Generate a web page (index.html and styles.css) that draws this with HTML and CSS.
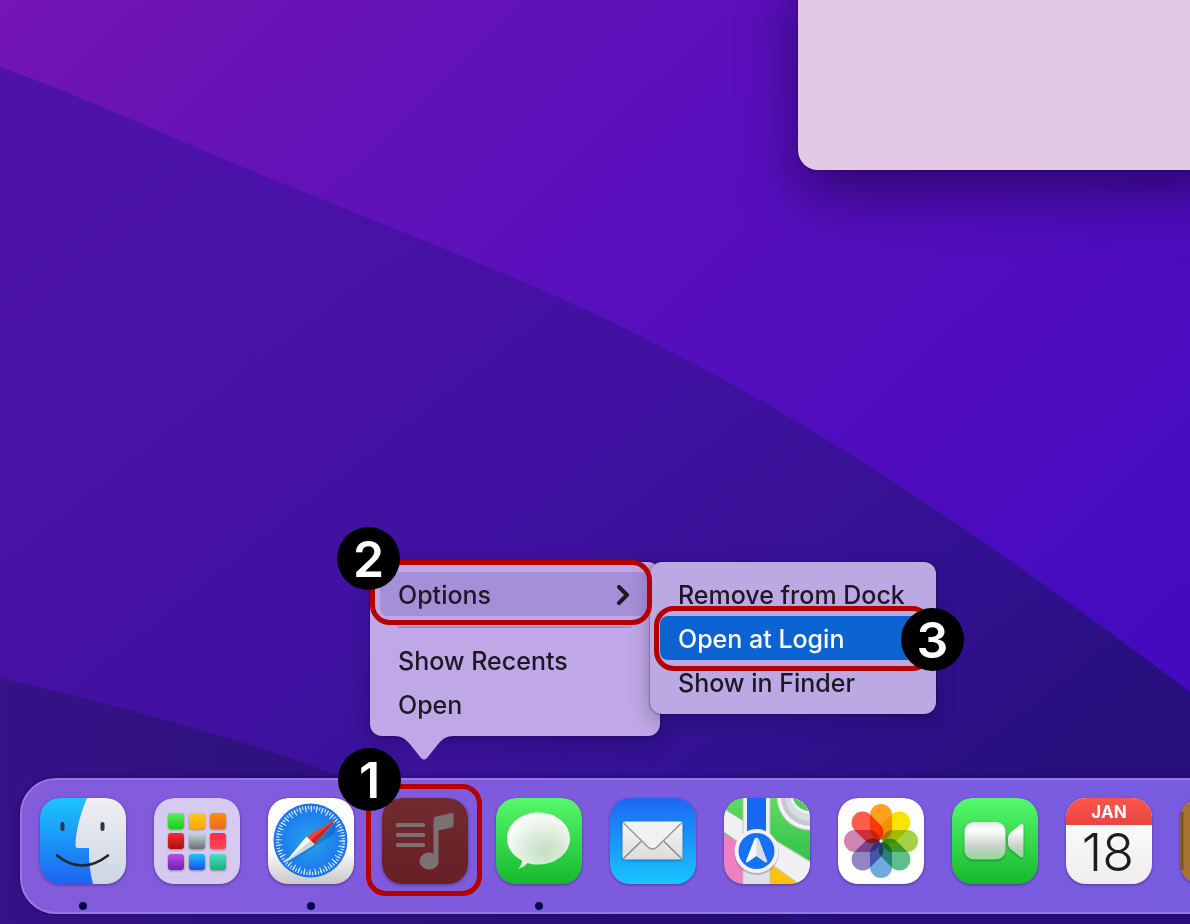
FILE: index.html
```
<!DOCTYPE html>
<html lang="en">
  <head>
    <meta charset="UTF-8" />
    <meta name="viewport" content="width=device-width, initial-scale=1.0" />
    <title>Desktop</title>
    <link rel="stylesheet" href="styles.css">
  </head>
  <body>
    <main class="desktop">
      <svg class="wallpaper" viewBox="0 0 1190 924" preserveAspectRatio="none" aria-hidden="true">
        <defs>
          <linearGradient id="sky" x1="0" y1="0" x2="1" y2="0.8">
            <stop offset="0" stop-color="#7415b4" />
            <stop offset="0.2" stop-color="#6512b6" />
            <stop offset="0.45" stop-color="#590fbd" />
            <stop offset="1" stop-color="#420abf" />
          </linearGradient>
          <linearGradient id="hill" gradientUnits="userSpaceOnUse" x1="200" y1="120" x2="830" y2="924">
            <stop offset="0" stop-color="#4c12aa" />
            <stop offset="0.5" stop-color="#4011a0" />
            <stop offset="0.8" stop-color="#321191" />
            <stop offset="1" stop-color="#27107e" />
          </linearGradient>
          <linearGradient id="valley" x1="0" y1="0" x2="1" y2="0">
            <stop offset="0" stop-color="#351286" />
            <stop offset="1" stop-color="#230f74" />
          </linearGradient>
        </defs>
        <rect width="1190" height="924" fill="url(#sky)" />
        <path d="M0 67C60 88 110 110 170 136C300 193 430 240 560 298C800 405 1000 550 1190 692V924H0Z" fill="url(#hill)" />
        <path d="M0 678C120 706 240 738 340 776C500 835 660 870 800 924H0Z" fill="url(#valley)" />
      </svg>

      <section class="window"></section>

      <nav class="dock">
        <button class="dock-item" aria-label="Finder">
          <svg class="icon" viewBox="0 0 86 86">
            <defs>
              <linearGradient id="finder" x2="0" y2="1"><stop stop-color="#1cc4fe" /><stop offset="1" stop-color="#1b64f2" /></linearGradient>
              <linearGradient id="face" x2="0" y2="1"><stop stop-color="#f0eff2" /><stop offset="1" stop-color="#cbd5e1" /></linearGradient>
              <clipPath id="tile"><rect width="86" height="86" rx="20" /></clipPath>
            </defs>
            <g clip-path="url(#tile)">
              <rect width="86" height="86" fill="url(#finder)" />
              <path d="M47 0C40 17 36 32 35.500 47Q35.500 50 38 50H49C48.500 62 50 75 53 86H86V0Z" fill="url(#face)" />
              <path d="M22.500 26V31M62.500 26V31" stroke="#32373f" stroke-width="4" stroke-linecap="round" />
              <path d="M17 57.500Q42 77.500 68 57.500" fill="none" stroke="#202630" stroke-width="2.600" stroke-linecap="round" />
            </g>
          </svg>
          <span class="running"></span>
        </button>

        <button class="dock-item" aria-label="Launchpad">
          <svg class="icon" viewBox="0 0 86 86">
            <defs>
              <linearGradient id="l1" x2="0" y2="1"><stop stop-color="#5bf05a" /><stop offset="1" stop-color="#14cf1b" /></linearGradient>
              <linearGradient id="l2" x2="0" y2="1"><stop stop-color="#ffc61c" /><stop offset="1" stop-color="#fda509" /></linearGradient>
              <linearGradient id="l3" x2="0" y2="1"><stop stop-color="#fa9108" /><stop offset="1" stop-color="#ee6a20" /></linearGradient>
              <linearGradient id="l4" x2="0" y2="1"><stop stop-color="#f52f2c" /><stop offset="1" stop-color="#b20d0d" /></linearGradient>
              <linearGradient id="l5" x2="0" y2="1"><stop stop-color="#c3dbe0" /><stop offset="1" stop-color="#6f6d72" /></linearGradient>
              <linearGradient id="l6" x2="0" y2="1"><stop stop-color="#fb2b48" /><stop offset="1" stop-color="#fe4659" /></linearGradient>
              <linearGradient id="l7" x2="0" y2="1"><stop stop-color="#bb50e8" /><stop offset="1" stop-color="#6f1fb0" /></linearGradient>
              <linearGradient id="l8" x2="0" y2="1"><stop stop-color="#1bc4fb" /><stop offset="1" stop-color="#1b50ee" /></linearGradient>
              <linearGradient id="l9" x2="0" y2="1"><stop stop-color="#50dcc8" /><stop offset="1" stop-color="#12b574" /></linearGradient>
            </defs>
            <rect width="86" height="86" rx="20" fill="#d6caf1" />
            <g class="pads">
              <rect x="14" y="15" width="16" height="16" rx="3" fill="url(#l1)" />
              <rect x="35" y="15" width="16" height="16" rx="3" fill="url(#l2)" />
              <rect x="56" y="15" width="16" height="16" rx="3" fill="url(#l3)" />
              <rect x="14" y="35" width="16" height="16" rx="3" fill="url(#l4)" />
              <rect x="35" y="35" width="16" height="16" rx="3" fill="url(#l5)" />
              <rect x="56" y="35" width="16" height="16" rx="3" fill="url(#l6)" />
              <rect x="14" y="56" width="16" height="16" rx="3" fill="url(#l7)" />
              <rect x="35" y="56" width="16" height="16" rx="3" fill="url(#l8)" />
              <rect x="56" y="56" width="16" height="16" rx="3" fill="url(#l9)" />
            </g>
          </svg>
        </button>

        <button class="dock-item" aria-label="Safari">
          <svg class="icon" viewBox="0 0 86 86">
            <defs>
              <linearGradient id="safari" x2="0" y2="1"><stop offset="0.6" stop-color="#fff" /><stop offset="1" stop-color="#c9c9cb" /></linearGradient>
              <radialGradient id="dial"><stop stop-color="#25a4ef" /><stop offset="1" stop-color="#1c72ea" /></radialGradient>
            </defs>
            <rect width="86" height="86" rx="20" fill="url(#safari)" />
            <circle cx="42.500" cy="42.500" r="37" fill="url(#dial)" />
            <circle cx="42.500" cy="42.500" r="33" fill="none" stroke="#d8edfd" stroke-width="3.500" stroke-dasharray="1.100 1.780" />
            <circle cx="42.500" cy="42.500" r="31.500" fill="none" stroke="#d8edfd" stroke-width="6" stroke-dasharray="1.100 4.398" />
            <path d="M20 66L47 46L70 22L66 36Z" fill="#0b3a8c" opacity="0.3" />
            <path d="M68 21L38.500 38.500L46.500 46.500Z" fill="#f0403c" />
            <path d="M68 21L42.500 42.500L46.500 46.500Z" fill="#c92424" />
            <path d="M17 64.500L38.500 38.500L46.500 46.500Z" fill="#fff" />
            <path d="M17 64.500L42.500 42.500L46.500 46.500Z" fill="#cfd3da" />
          </svg>
          <span class="running"></span>
        </button>

        <div class="dock-item">
          <button class="launcher" aria-label="Playlists">
            <svg class="icon" viewBox="0 0 86 86">
              <defs>
                <linearGradient id="music" x2="0" y2="1"><stop stop-color="#702a31" /><stop offset="1" stop-color="#672124" /></linearGradient>
              </defs>
              <rect width="86" height="86" rx="20" fill="url(#music)" />
              <g fill="#7c7072">
                <rect x="14" y="25" width="29" height="4" rx="1.500" />
                <rect x="14" y="35" width="29" height="4" rx="1.500" />
                <rect x="14" y="45" width="29" height="4" rx="1.500" />
                <path d="M51.500 21.500Q51.500 19 54 18.500L69.500 15Q71.500 15 71.500 17V27Q71.500 29 69.500 29.500L56.500 32.500V62A9.500 8.500 0 1 1 51.500 55.500Z" />
              </g>
            </svg>
          </button>
          <span class="ring ring-icon"></span>
          <span class="badge badge-icon">1</span>

          <div class="menu dock-menu">
            <div class="entry">
              <button class="menu-item open">
                Options
                <svg class="chevron" viewBox="0 0 12 20"><path d="M2 2L10 10L2 18" /></svg>
              </button>
              <div class="menu submenu">
                <button class="menu-item">Remove from Dock</button>
                <div class="entry">
                  <button class="menu-item selected">Open at Login</button>
                  <span class="ring ring-login"></span>
                  <span class="badge badge-login">3</span>
                </div>
                <button class="menu-item">Show in Finder</button>
              </div>
              <span class="ring ring-options"></span>
              <span class="badge badge-options">2</span>
            </div>
            <hr class="separator" />
            <button class="menu-item">Show Recents</button>
            <button class="menu-item">Open</button>
            <svg class="tail" viewBox="0 0 60 24"><path d="M0 0C8 0 11 3 15 7L27 22Q30 25 33 22L45 7C49 3 52 0 60 0Z" /></svg>
          </div>
        </div>

        <button class="dock-item" aria-label="Messages">
          <svg class="icon" viewBox="0 0 86 86">
            <defs>
              <linearGradient id="green" x2="0" y2="1"><stop stop-color="#55f76c" /><stop offset="1" stop-color="#17b92c" /></linearGradient>
              <radialGradient id="bubble" cx="0.6" cy="0.68" r="0.75"><stop stop-color="#c3dfc1" /><stop offset="0.4" stop-color="#dbebda" /><stop offset="0.8" stop-color="#f6faf6" /><stop offset="1" stop-color="#fff" /></radialGradient>
            </defs>
            <rect width="86" height="86" rx="20" fill="url(#green)" />
            <path d="M42.500 14.500C60 14.500 74 26 74 40.500S60 66.500 42.500 66.500C38.500 66.500 35 66 31.500 65C29 68 26 70 22.500 70.500C25 68 26 65 26 62.500C17 58 11 50 11 40.500C11 26 25 14.500 42.500 14.500Z" fill="url(#bubble)" />
          </svg>
          <span class="running"></span>
        </button>

        <button class="dock-item" aria-label="Mail">
          <svg class="icon" viewBox="0 0 86 86">
            <defs>
              <linearGradient id="mail" x2="0" y2="1"><stop stop-color="#1b67f2" /><stop offset="1" stop-color="#1ac5fe" /></linearGradient>
              <linearGradient id="paper" x2="0" y2="1"><stop stop-color="#f6f6f6" /><stop offset="1" stop-color="#dcdcdc" /></linearGradient>
            </defs>
            <rect width="86" height="86" rx="20" fill="url(#mail)" />
            <g class="raised">
              <rect x="12.500" y="23.500" width="60" height="38" rx="2.500" fill="url(#paper)" />
              <path d="M13.500 60.500L31 43.500M71.500 60.500L54 43.500" stroke="#808080" stroke-width="1.200" />
              <path d="M13.500 25L36 47Q42.500 55 49 47L71.500 25" fill="#f1f1f1" stroke="#989898" stroke-width="1.500" />
            </g>
          </svg>
        </button>

        <button class="dock-item" aria-label="Maps">
          <svg class="icon" viewBox="0 0 86 86">
            <defs>
              <linearGradient id="land" x2="0" y2="1"><stop stop-color="#5edb5b" /><stop offset="1" stop-color="#24b947" /></linearGradient>
            </defs>
            <g clip-path="url(#tile)">
              <rect width="86" height="86" fill="url(#land)" />
              <path d="M0 36L24 48V86H0Z" fill="#ee7fc1" />
              <path d="M46 60L78 86H46Z" fill="#fdc00d" />
              <path d="M0 11L86 63V86H75L0 34Z" fill="#f0f0f2" />
              <path d="M86 64V86H76L66 77Z" fill="#f0f0f2" />
              <path d="M0 34L20 48M46 65L75 86M0 11L86 64" stroke="#b9c3c1" stroke-width="1" />
              <rect x="19" width="27" height="86" fill="#eceef1" />
              <rect x="23" width="19" height="86" fill="#1569f2" />
              <rect x="19" y="60" width="27" height="26" fill="#dfe0e5" />
              <path d="M19 0V86M46 0V86" stroke="#b9c3c1" stroke-width="0.800" />
              <circle cx="86" cy="-1" r="33.500" fill="#c4c7cc" />
              <circle cx="86" cy="-1" r="32.500" fill="#f3f3f5" />
              <circle cx="86" cy="-1" r="29" fill="#c6c9cf" />
              <circle cx="86" cy="-2" r="25" fill="#d9dbe0" />
              <circle cx="86" cy="-4" r="20" fill="#f3f3f5" />
              <circle cx="86" cy="-5" r="18" fill="#4fce59" />
              <circle cx="32.500" cy="54.500" r="22.500" fill="#4a5a70" opacity="0.300" />
              <circle cx="32.500" cy="53" r="22" fill="#f2f2f5" />
              <circle cx="32.500" cy="53" r="18" fill="#1571f5" />
              <path d="M32.500 39.500Q34 39.500 35 42L43 63Q43.500 65 41 64L32.500 58L24 64Q21.500 65 22 63L30 42Q31 39.500 32.500 39.500Z" fill="#f7f7fa" />
              <path d="M32.500 40Q34 40 35 42L43 63Q43.500 65 41 64L32.500 58Z" fill="#d9dce3" />
            </g>
          </svg>
        </button>

        <button class="dock-item" aria-label="Photos">
          <svg class="icon" viewBox="0 0 86 86">
            <rect width="86" height="86" rx="20" fill="#fdfdfd" />
            <g class="petals" transform="translate(43 43)">
              <rect x="-11" y="-37" width="22" height="36" rx="11" fill="#fba021" />
              <rect x="-11" y="-37" width="22" height="36" rx="11" fill="#f8e400" transform="rotate(45)" />
              <rect x="-11" y="-37" width="22" height="36" rx="11" fill="#a6d045" transform="rotate(90)" />
              <rect x="-11" y="-37" width="22" height="36" rx="11" fill="#5fbf8b" transform="rotate(135)" />
              <rect x="-11" y="-37" width="22" height="36" rx="11" fill="#6fa9de" transform="rotate(180)" />
              <rect x="-11" y="-37" width="22" height="36" rx="11" fill="#9384c2" transform="rotate(225)" />
              <rect x="-11" y="-37" width="22" height="36" rx="11" fill="#d083b5" transform="rotate(270)" />
              <rect x="-11" y="-37" width="22" height="36" rx="11" fill="#fb5c4c" transform="rotate(315)" />
            </g>
            <circle cx="43" cy="43" r="1.500" fill="#fff" />
          </svg>
        </button>

        <button class="dock-item" aria-label="FaceTime">
          <svg class="icon" viewBox="0 0 86 86">
            <defs>
              <linearGradient id="camera" x2="0" y2="1"><stop stop-color="#dfeadf" /><stop offset="0.2" stop-color="#fff" /><stop offset="0.65" stop-color="#c8d2c9" /><stop offset="1" stop-color="#8fdc93" /></linearGradient>
            </defs>
            <rect width="86" height="86" rx="20" fill="url(#green)" />
            <g class="raised">
              <rect x="12.500" y="24" width="41" height="37.500" rx="9" fill="url(#camera)" />
              <path d="M56 40Q56 37 58 35L68 26.500Q71.500 24.500 71.500 28V57.500Q71.500 61 68 59L58 50.500Q56 48.500 56 46Z" fill="url(#camera)" />
            </g>
          </svg>
        </button>

        <button class="dock-item" aria-label="Calendar">
          <span class="icon calendar">
            <span class="month">JAN</span>
            <span class="day">18</span>
          </span>
        </button>

        <button class="dock-item" aria-label="Contacts">
          <svg class="icon" viewBox="0 0 86 86">
            <rect width="86" height="86" rx="20" fill="#a87431" />
            <path d="M2 14V72" stroke="#7b5425" stroke-width="3" />
          </svg>
        </button>
      </nav>
    </main>
  </body>
</html>
```
FILE: styles.css
```
* {
  box-sizing: border-box;
}

body {
  margin: 0;
  font-family: Inter, 'Liberation Sans', sans-serif;
}

button {
  border: none;
  padding: 0;
  background: none;
  color: inherit;
  font: inherit;
  text-align: left;
}

.desktop {
  position: relative;
  height: 100vh;
  overflow: hidden;
  background: #4011a0;
}

.wallpaper {
  display: block;
  width: 100%;
  height: 100%;
}

.window {
  position: absolute;
  top: -40px;
  left: 798px;
  right: -40px;
  height: 210px;
  border-radius: 20px;
  background: #e2c9e4;
  box-shadow: 0 22px 56px rgba(20, 0, 60, 0.6), 0 0 2px rgba(20, 0, 60, 0.6);
}

/* Dock */
.dock {
  position: absolute;
  left: 20px;
  right: -60px;
  bottom: 10px;
  display: flex;
  gap: 28px;
  height: 136px;
  padding: 18px;
  border: 2px solid #9678e6;
  border-radius: 36px;
  background: linear-gradient(90deg, #835bdb, #775ce0);
  box-shadow: 0 0 5px rgba(10, 0, 50, 0.5);
}

.dock-item {
  position: relative;
  flex: none;
  display: flex;
  flex-direction: column;
  align-items: center;
  gap: 18px;
  width: 86px;
}

.icon {
  display: block;
  width: 86px;
  height: 86px;
  flex: none;
  border-radius: 20px;
  box-shadow: 0 1px 3px rgba(30, 10, 80, 0.45);
}

.running {
  width: 8px;
  height: 8px;
  flex: none;
  border-radius: 50%;
  background: #04004f;
}

.raised,
.pads {
  filter: drop-shadow(0 1px 1px rgba(0, 0, 0, 0.35));
}

.petals {
  isolation: isolate;
}

.petals rect {
  mix-blend-mode: multiply;
}

.calendar {
  display: flex;
  flex-direction: column;
  overflow: hidden;
  background: linear-gradient(#ffffff, #efeeec);
  text-align: center;
}

.month {
  height: 27px;
  background: linear-gradient(#fd554c, #e8463f);
  color: #fff;
  font-size: 17px;
  font-weight: 700;
  line-height: 29px;
}

.day {
  padding-right: 2px;
  color: #1d1d1f;
  font-size: 52px;
  font-weight: 300;
  line-height: 56px;
}

/* Menus */
.menu {
  position: absolute;
  padding: 10px;
  border-radius: 12px;
  background: #bfa8e5;
  box-shadow: 0 0 2px rgba(20, 0, 60, 0.7), 0 6px 20px rgba(20, 0, 60, 0.3);
  color: #1d1726;
  font-size: 25px;
  font-weight: 500;
}

.dock-menu {
  left: -12px;
  bottom: 158px;
  width: 290px;
}

.submenu {
  top: -10px;
  left: 270px;
  width: 286px;
  background: #bca8e3;
}

.entry {
  position: relative;
}

.menu-item {
  display: flex;
  align-items: center;
  justify-content: space-between;
  width: 100%;
  height: 44px;
  padding: 2px 18px 0;
  border-radius: 8px;
  white-space: nowrap;
}

.menu-item.open {
  background: #a68fd9;
}

.menu-item.selected {
  background: #0c63d2;
  color: #fff;
}

.chevron {
  width: 12px;
  height: 20px;
  margin-right: 3px;
  fill: none;
  stroke: #1d1726;
  stroke-width: 4;
  stroke-linecap: round;
  stroke-linejoin: round;
}

.separator {
  height: 2px;
  margin: 10px 18px;
  border: none;
  background: #a38ccd;
}

.tail {
  position: absolute;
  top: 100%;
  left: 24px;
  width: 60px;
  height: 24px;
  fill: #bfa8e5;
}

/* Step markers */
.ring {
  position: absolute;
  border: 5px solid #b60000;
  border-radius: 20px;
  pointer-events: none;
}

.badge {
  position: absolute;
  display: flex;
  align-items: center;
  justify-content: center;
  width: 63px;
  height: 63px;
  border-radius: 50%;
  background: #000;
  color: #fff;
  font-size: 50px;
  font-weight: 600;
}

.ring-icon {
  top: -14px;
  left: -16px;
  width: 116px;
  height: 112px;
}

.ring-options {
  inset: -12px -2px -9px -10px;
}

.ring-login {
  inset: -10px -6px -11px -6px;
}

.badge-icon {
  top: -50px;
  left: -44px;
}

.badge-options {
  top: -45px;
  left: -43px;
}

.badge-login {
  top: -8px;
  right: -38px;
}
```
